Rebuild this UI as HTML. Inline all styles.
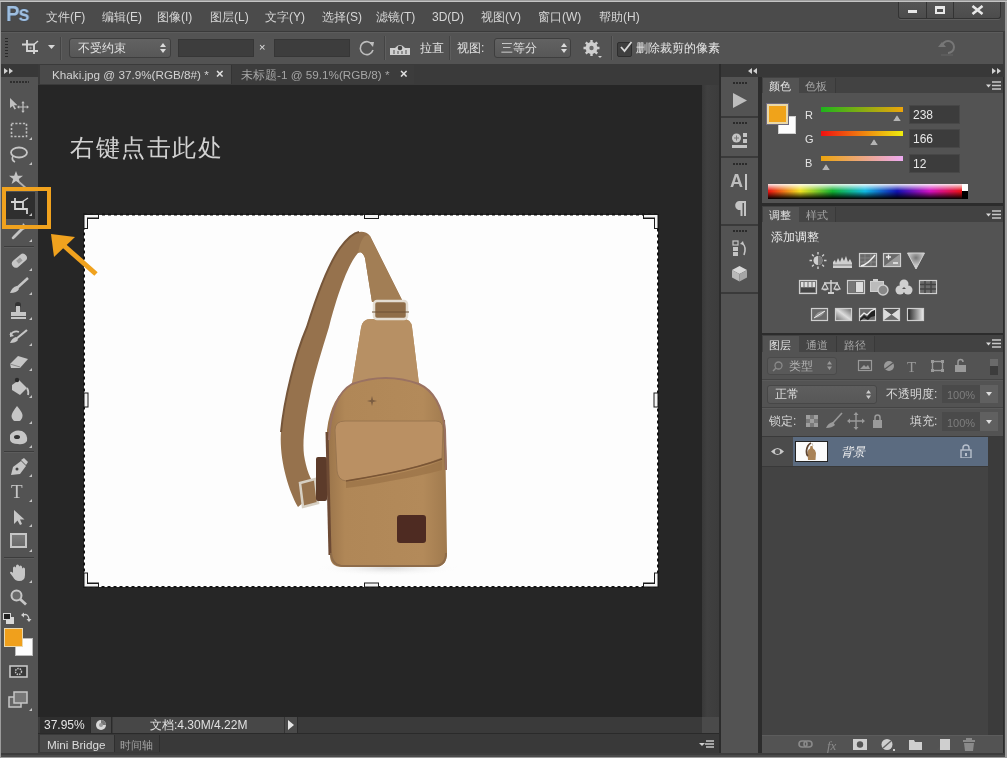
<!DOCTYPE html>
<html><head><meta charset="utf-8">
<style>
*{margin:0;padding:0;box-sizing:border-box}
html,body{width:1007px;height:758px;overflow:hidden;background:#9a9a9a;font-family:"Liberation Sans",sans-serif;}
.a{position:absolute}
.t{position:absolute;will-change:transform;white-space:nowrap;color:#d6d6d6;font-size:12px;line-height:14px}
</style></head><body>
<div class="a" style="left:0;top:0;width:1007px;height:758px;background:#9c9c9c"></div>
<div class="a" style="left:0;top:1px;width:1007px;height:1px;background:#c4c4c4"></div>
<div class="a" style="left:1px;top:2px;width:1004px;height:755px;background:#3c3c3c"></div>
<div class="a" style="left:1px;top:755px;width:1004px;height:2px;background:#4a4a4a"></div>
<!-- menu bar -->
<div class="a" id="menubar" style="left:1px;top:2px;width:1004px;height:30px;background:#4b4b4b;border-bottom:1px solid #3a3a3a"></div>
<!-- options bar -->
<div class="a" id="opts" style="left:1px;top:32px;width:1002px;height:32px;background:#535353;border-top:1px solid #5c5c5c"></div>
<!-- left toolbar -->
<div class="a" id="toolhead" style="left:1px;top:64px;width:37px;height:13px;background:#383838"></div>
<div class="a" id="toolbar" style="left:1px;top:77px;width:37px;height:676px;background:#535353"></div>
<!-- doc area -->
<div class="a" id="tabbar" style="left:38px;top:64px;width:682px;height:21px;background:#3a3a3a"></div>
<div class="a" id="canvas" style="left:38px;top:85px;width:664px;height:632px;background:#262626"></div>
<div class="a" id="vscroll" style="left:702px;top:85px;width:17px;height:632px;background:linear-gradient(90deg,#383838,#404040 30%,#3c3c3c)"></div>
<div class="a" id="status" style="left:38px;top:717px;width:664px;height:16px;background:#3a3a3a"></div>
<div class="a" id="corner" style="left:702px;top:717px;width:17px;height:16px;background:#4a4a4a"></div>
<div class="a" id="minib" style="left:38px;top:733px;width:682px;height:20px;background:#3a3a3a;border-top:1px solid #2a2a2a"></div>
<!-- dock -->
<div class="a" style="left:719px;top:64px;width:285px;height:689px;background:#2c2c2c"></div>
<div class="a" id="dockhead" style="left:721px;top:64px;width:283px;height:13px;background:#383838"></div>
<div class="a" id="iconcol" style="left:721px;top:77px;width:37px;height:676px;background:#535353"></div>
<!-- right panels -->
<div class="a" id="pcolor" style="left:762px;top:77px;width:241px;height:126px;background:#535353"></div>
<div class="a" id="padj" style="left:762px;top:206px;width:241px;height:127px;background:#535353"></div>
<div class="a" id="players" style="left:762px;top:335px;width:241px;height:418px;background:#535353"></div>

<!-- MENU CONTENT -->
<div class="t" style="left:6px;top:2px;font-size:22.5px;line-height:24px;font-weight:bold;color:#9fbfe0;letter-spacing:-1.2px;transform:scaleX(0.9);transform-origin:0 0;text-shadow:0 0 1px #2a4a78">Ps</div>
<div class="t" style="left:46px;top:10px">文件(F)</div>
<div class="t" style="left:102px;top:10px">编辑(E)</div>
<div class="t" style="left:157px;top:10px">图像(I)</div>
<div class="t" style="left:210px;top:10px">图层(L)</div>
<div class="t" style="left:265px;top:10px">文字(Y)</div>
<div class="t" style="left:322px;top:10px">选择(S)</div>
<div class="t" style="left:376px;top:10px">滤镜(T)</div>
<div class="t" style="left:432px;top:10px">3D(D)</div>
<div class="t" style="left:481px;top:10px">视图(V)</div>
<div class="t" style="left:538px;top:10px">窗口(W)</div>
<div class="t" style="left:599px;top:10px">帮助(H)</div>
<!-- window buttons -->
<div class="a" style="left:898px;top:2px;width:103px;height:17px;background:linear-gradient(#555,#4c4c4c);border:1px solid #333;border-top:none;border-radius:0 0 3px 3px;box-shadow:0 1px 0 #5e5e5e"></div>
<div class="a" style="left:926px;top:2px;width:1px;height:16px;background:#333"></div>
<div class="a" style="left:953px;top:2px;width:1px;height:16px;background:#333"></div>
<div class="a" style="left:908px;top:10px;width:9px;height:3px;background:#e8e8e8"></div>
<div class="a" style="left:935px;top:6px;width:10px;height:8px;border:2px solid #e8e8e8;border-top-width:3px"></div>
<svg class="a" style="left:971px;top:5px" width="13" height="10"><path d="M1.5 1 L11.5 9 M11.5 1 L1.5 9" stroke="#e8e8e8" stroke-width="2.6"/></svg>

<!-- OPTIONS CONTENT -->
<div class="a" style="left:5px;top:38px;width:3px;height:20px;background:repeating-linear-gradient(#2a2a2a 0 1px,transparent 1px 3px)"></div>
<svg class="a" style="left:20px;top:38px" width="20" height="18"><path d="M7 2 V13 H18 M2 6.5 H14 V16" stroke="#d4d4d4" stroke-width="1.9" fill="none"/><path d="M14 6.5 L18 3" stroke="#d4d4d4" stroke-width="1.4"/><circle cx="10.5" cy="10" r="1.2" fill="#999"/></svg>
<svg class="a" style="left:48px;top:45px" width="7" height="5"><path d="M0 0 H7 L3.5 4Z" fill="#d8d8d8"/></svg>
<div class="a" style="left:60px;top:37px;width:1px;height:23px;background:#444;box-shadow:1px 0 0 #5e5e5e"></div>
<div class="a" style="left:69px;top:38px;width:102px;height:20px;border-radius:3px;background:linear-gradient(#626262,#575757);border:1px solid #3e3e3e"></div>
<div class="t" style="left:78px;top:41px;color:#e0e0e0">不受约束</div>
<svg class="a" style="left:160px;top:43px" width="6" height="10"><path d="M0 4 L3 0 L6 4Z M0 6 L3 10 L6 6Z" fill="#dcdcdc"/></svg>
<div class="a" style="left:178px;top:39px;width:76px;height:18px;background:#3d3d3d;border:1px solid #363636"></div>
<div class="t" style="left:259px;top:40px;font-size:11px;color:#e0e0e0">×</div>
<div class="a" style="left:274px;top:39px;width:76px;height:18px;background:#3d3d3d;border:1px solid #363636"></div>
<svg class="a" style="left:358px;top:39px" width="18" height="18"><path d="M14.5 6 A6.5 6.5 0 1 0 15 11" stroke="#bdbdbd" stroke-width="1.6" fill="none"/><path d="M11 3 L16 3 L15 8Z" fill="#bdbdbd"/></svg>
<div class="a" style="left:384px;top:36px;width:1px;height:24px;background:#444;box-shadow:1px 0 0 #5e5e5e"></div>
<svg class="a" style="left:389px;top:41px" width="22" height="15"><path d="M1 7 H21 V14 H1Z" fill="#d0d0d0"/><path d="M6 7 Q11 1 16 7" fill="#d0d0d0"/><circle cx="11" cy="7" r="2.3" fill="#444"/><path d="M5 9 V13 M9 10 V13 M13 10 V13 M17 9 V13" stroke="#666" stroke-width="1.2"/></svg>
<div class="t" style="left:420px;top:41px;color:#e0e0e0">拉直</div>
<div class="a" style="left:449px;top:36px;width:1px;height:24px;background:#444;box-shadow:1px 0 0 #5e5e5e"></div>
<div class="t" style="left:457px;top:41px;color:#e0e0e0">视图:</div>
<div class="a" style="left:494px;top:38px;width:77px;height:20px;border-radius:3px;background:linear-gradient(#626262,#575757);border:1px solid #3e3e3e"></div>
<div class="t" style="left:501px;top:41px;color:#e0e0e0">三等分</div>
<svg class="a" style="left:561px;top:43px" width="6" height="10"><path d="M0 4 L3 0 L6 4Z M0 6 L3 10 L6 6Z" fill="#dcdcdc"/></svg>
<svg class="a" style="left:583px;top:39px" width="20" height="20"><g fill="#cfcfcf"><circle cx="8.5" cy="9" r="6"/><g stroke="#cfcfcf" stroke-width="2.4"><path d="M8.5 1 V17 M0.5 9 H16.5 M2.8 3.3 L14.2 14.7 M14.2 3.3 L2.8 14.7"/></g></g><circle cx="8.5" cy="9" r="2.2" fill="#6a6a6a"/><path d="M15 17 H19 L17 19Z" fill="#cfcfcf"/></svg>
<div class="a" style="left:611px;top:36px;width:1px;height:24px;background:#444;box-shadow:1px 0 0 #5e5e5e"></div>
<div class="a" style="left:617px;top:42px;width:15px;height:15px;background:#3f3f3f;border:1px solid #2e2e2e;border-radius:2px"></div>
<svg class="a" style="left:619px;top:40px" width="14" height="14"><path d="M2 7 L5.5 11 L12.5 2" stroke="#d8d8d8" stroke-width="1.8" fill="none"/></svg>
<div class="t" style="left:636px;top:41px;color:#e6e6e6">删除裁剪的像素</div>
<svg class="a" style="left:937px;top:38px" width="20" height="20"><path d="M5 9 A6 6 0 1 1 11 15" stroke="#777" stroke-width="2" fill="none"/><path d="M1 9 H9 L5 4Z" fill="#777" transform="rotate(0)"/><path d="M4 17 H16" stroke="#666" stroke-width="1"/></svg>

<!-- TABS -->
<div class="a" style="left:40px;top:65px;width:191px;height:19px;background:#4a4a4a"></div>
<div class="t" style="left:52px;top:68px;color:#d2d2d2;font-size:11.7px">Khaki.jpg @ 37.9%(RGB/8#) *</div>
<div class="t" style="left:216px;top:67px;color:#e0e0e0;font-size:13px;font-weight:bold">×</div>
<div class="a" style="left:231px;top:65px;width:183px;height:19px;background:#3c3c3c;border-left:1px solid #333"></div>
<div class="t" style="left:241px;top:68px;color:#a6a6a6;font-size:11.7px">未标题-1 @ 59.1%(RGB/8) *</div>
<div class="t" style="left:400px;top:67px;color:#e0e0e0;font-size:13px;font-weight:bold">×</div>
<!-- TOOLBAR CONTENT -->
<svg class="a" style="left:4px;top:68px" width="9" height="6"><path d="M0 0 L4 3 L0 6Z M5 0 L9 3 L5 6Z" fill="#cfcfcf"/></svg>
<div class="a" style="left:10px;top:81px;width:19px;height:2px;background:repeating-linear-gradient(90deg,#2e2e2e 0 2px,transparent 2px 3px)"></div>
<!-- move -->
<svg class="a" style="left:9px;top:97px" width="20" height="16"><path d="M1 1 L1 11 L3.5 9 L5.5 12.5 L7 11.7 L5 8.3 L8.5 8.3Z" fill="#c0c0c0"/><path d="M14 5.5 V14.5 M9.5 10 H18.5" stroke="#c0c0c0" stroke-width="1.2"/><path d="M14 4 L12.3 6.2 H15.7Z M14 16 L12.3 13.8 H15.7Z M8 10 L10.2 8.3 V11.7Z M20 10 L17.8 8.3 V11.7Z" fill="#c0c0c0"/></svg>
<!-- marquee -->
<svg class="a" style="left:10px;top:122px" width="18" height="16"><rect x="1.5" y="1.5" width="15" height="13" fill="none" stroke="#bdbdbd" stroke-width="1.6" stroke-dasharray="2.2 1.6"/></svg>
<svg class="a" style="left:29px;top:137px" width="3" height="3"><path d="M3 0 V3 H0Z" fill="#c4c4c4"/></svg>
<!-- lasso -->
<svg class="a" style="left:9px;top:146px" width="20" height="17"><ellipse cx="10" cy="6.5" rx="8" ry="5" stroke="#c6c6c6" stroke-width="1.8" fill="none"/><path d="M4 10 Q2 14 6 16" stroke="#c6c6c6" stroke-width="1.6" fill="none"/></svg>
<svg class="a" style="left:29px;top:162px" width="3" height="3"><path d="M3 0 V3 H0Z" fill="#c4c4c4"/></svg>
<!-- quick select -->
<svg class="a" style="left:8px;top:170px" width="22" height="20"><path d="M8 1 L9.8 5.8 L15 5.8 L10.8 9 L12.4 14 L8 11 L3.6 14 L5.2 9 L1 5.8 L6.2 5.8Z" fill="#c4c4c4"/><path d="M11 12 L19 19" stroke="#b0b0b0" stroke-width="1.8"/></svg>
<!-- crop selected -->
<div class="a" style="left:6px;top:192px;width:29px;height:27px;background:#2f2f2f"></div>
<svg class="a" style="left:10px;top:197px" width="20" height="18"><path d="M5 1 V12 H17 V17 M1 5 H13 V12" stroke="#d4d4d4" stroke-width="1.8" fill="none"/><path d="M12 5 L18 1" stroke="#d4d4d4" stroke-width="1.4"/></svg>
<svg class="a" style="left:29px;top:213px" width="3" height="3"><path d="M3 0 V3 H0Z" fill="#c4c4c4"/></svg>
<!-- eyedropper -->
<svg class="a" style="left:10px;top:221px" width="18" height="20"><path d="M13 2 L16 5 L14 7 L15 8 L13 9 L5 17 L3 18.5 L1.5 17 L3 15 L11 7 L10 5 L12 6Z" fill="#c4c4c4"/></svg>
<svg class="a" style="left:29px;top:239px" width="3" height="3"><path d="M3 0 V3 H0Z" fill="#c4c4c4"/></svg>
<div class="a" style="left:4px;top:246px;width:30px;height:1px;background:#3c3c3c;box-shadow:0 1px 0 #5c5c5c"></div>
<!-- healing -->
<svg class="a" style="left:9px;top:252px" width="20" height="18"><rect x="2" y="5" width="17" height="8" rx="4" transform="rotate(-40 10 9)" fill="#c6c6c6"/><rect x="8" y="7" width="5" height="4" fill="#9a9a9a" transform="rotate(-40 10 9)"/></svg>
<svg class="a" style="left:29px;top:268px" width="3" height="3"><path d="M3 0 V3 H0Z" fill="#c4c4c4"/></svg>
<!-- brush -->
<svg class="a" style="left:9px;top:277px" width="20" height="17"><path d="M19 1 L8 11" stroke="#c6c6c6" stroke-width="2.5"/><path d="M8 9 Q3 10 1 16 Q8 16 10 12Z" fill="#c6c6c6"/></svg>
<svg class="a" style="left:29px;top:292px" width="3" height="3"><path d="M3 0 V3 H0Z" fill="#c4c4c4"/></svg>
<!-- stamp -->
<svg class="a" style="left:9px;top:301px" width="20" height="19"><circle cx="9" cy="4" r="3" fill="#333"/><rect x="7" y="5" width="4" height="6" fill="#c6c6c6"/><rect x="2" y="11" width="15" height="4" fill="#c6c6c6"/><rect x="2" y="16" width="15" height="2" fill="#c6c6c6"/></svg>
<svg class="a" style="left:29px;top:317px" width="3" height="3"><path d="M3 0 V3 H0Z" fill="#c4c4c4"/></svg>
<!-- history brush -->
<svg class="a" style="left:9px;top:329px" width="20" height="16"><path d="M18 1 L7 10" stroke="#c6c6c6" stroke-width="2.2"/><path d="M7 8 Q3 9 1 14 Q7 14 9 11Z" fill="#c6c6c6"/><path d="M1 6 Q5 1 10 3" stroke="#c6c6c6" stroke-width="1.6" fill="none"/><path d="M1 3 L1 8 L5 7Z" fill="#c6c6c6"/></svg>
<svg class="a" style="left:29px;top:343px" width="3" height="3"><path d="M3 0 V3 H0Z" fill="#c4c4c4"/></svg>
<!-- eraser -->
<svg class="a" style="left:9px;top:354px" width="20" height="16"><path d="M1 10 L9 2 L19 5 L11 14 L2 14Z" fill="#c6c6c6"/><path d="M1 10 L11 13" stroke="#888" stroke-width="1"/></svg>
<svg class="a" style="left:29px;top:368px" width="3" height="3"><path d="M3 0 V3 H0Z" fill="#c4c4c4"/></svg>
<!-- bucket -->
<svg class="a" style="left:8px;top:377px" width="22" height="20"><path d="M4 8 L11 3 L19 11 L12 18 L4 13Z" fill="#c6c6c6"/><circle cx="9" cy="3" r="2.2" fill="#2a2a2a"/><path d="M19 11 Q21 15 20 18" stroke="#c6c6c6" stroke-width="1.8" fill="none"/></svg>
<svg class="a" style="left:29px;top:395px" width="3" height="3"><path d="M3 0 V3 H0Z" fill="#c4c4c4"/></svg>
<!-- blur -->
<svg class="a" style="left:10px;top:405px" width="16" height="16"><path d="M7 1 Q13 8 12.5 11 A5.5 5.5 0 0 1 1.5 11 Q1.5 8 7 1Z" fill="#c6c6c6"/></svg>
<svg class="a" style="left:29px;top:421px" width="3" height="3"><path d="M3 0 V3 H0Z" fill="#c4c4c4"/></svg>
<!-- dodge -->
<svg class="a" style="left:8px;top:428px" width="22" height="18"><path d="M2 7 Q6 1 14 3 Q20 6 19 13 Q16 17 10 16 Q3 16 2 12Z" fill="#c6c6c6"/><ellipse cx="9" cy="9" rx="3" ry="2" fill="#333"/></svg>
<svg class="a" style="left:29px;top:445px" width="3" height="3"><path d="M3 0 V3 H0Z" fill="#c4c4c4"/></svg>
<div class="a" style="left:4px;top:451px;width:30px;height:1px;background:#3c3c3c;box-shadow:0 1px 0 #5c5c5c"></div>
<!-- pen -->
<svg class="a" style="left:9px;top:458px" width="20" height="18"><path d="M2 17 L4 9 L12 3 L17 8 L11 16Z" fill="#c6c6c6"/><path d="M12 2 L15 0 L19 4 L17 7Z" fill="#c6c6c6"/><circle cx="8" cy="11" r="1.5" fill="#444"/></svg>
<svg class="a" style="left:29px;top:474px" width="3" height="3"><path d="M3 0 V3 H0Z" fill="#c4c4c4"/></svg>
<!-- type -->
<div class="t" style="left:11px;top:482px;font-family:'Liberation Serif',serif;font-size:19px;line-height:20px;color:#c6c6c6">T</div>
<svg class="a" style="left:29px;top:499px" width="3" height="3"><path d="M3 0 V3 H0Z" fill="#c4c4c4"/></svg>
<!-- path select -->
<svg class="a" style="left:13px;top:509px" width="12" height="17"><path d="M1 1 V15 L4.5 11.5 L7 16 L9 15 L7 10.5 L11.5 10.5Z" fill="#c6c6c6"/></svg>
<svg class="a" style="left:29px;top:524px" width="3" height="3"><path d="M3 0 V3 H0Z" fill="#c4c4c4"/></svg>
<!-- rect -->
<div class="a" style="left:10px;top:533px;width:17px;height:15px;background:linear-gradient(#7a7a7a,#6a6a6a);border:2px solid #c6c6c6"></div>
<svg class="a" style="left:29px;top:549px" width="3" height="3"><path d="M3 0 V3 H0Z" fill="#c4c4c4"/></svg>
<div class="a" style="left:4px;top:557px;width:30px;height:1px;background:#3c3c3c;box-shadow:0 1px 0 #5c5c5c"></div>
<!-- hand -->
<svg class="a" style="left:9px;top:564px" width="20" height="18"><path d="M4 9 V4 Q4 2.5 5.5 2.5 Q7 2.5 7 4 V2 Q7 0.5 8.5 0.5 Q10 0.5 10 2 V3 Q10 1.5 11.5 1.5 Q13 1.5 13 3 V5 Q13 3.5 14.5 3.5 Q16 3.5 16 5 V11 Q16 17 10 17 Q6 17 4 13 L1 9 Q1 7 3 8Z" fill="#c6c6c6"/></svg>
<svg class="a" style="left:29px;top:580px" width="3" height="3"><path d="M3 0 V3 H0Z" fill="#c4c4c4"/></svg>
<!-- zoom -->
<svg class="a" style="left:10px;top:589px" width="18" height="17"><circle cx="6.5" cy="6.5" r="5" stroke="#c6c6c6" stroke-width="2" fill="#6a6a6a"/><path d="M10 10 L16 15.5" stroke="#c6c6c6" stroke-width="2.8"/></svg>
<!-- default colors -->
<div class="a" style="left:6px;top:617px;width:8px;height:7px;background:#d8d8d8"></div>
<div class="a" style="left:3px;top:613px;width:8px;height:7px;background:#222;border:1px solid #d8d8d8"></div>
<svg class="a" style="left:21px;top:611px" width="11" height="12"><path d="M2 4 Q7 2 8 8" stroke="#d0d0d0" stroke-width="1.3" fill="none"/><path d="M0 4 L3 1.5 V6.5Z M8 11 L5.5 8 H10.5Z" fill="#d0d0d0"/></svg>
<!-- fg/bg -->
<div class="a" style="left:15px;top:638px;width:18px;height:18px;background:#fdfdfd;border:1px solid #bbb"></div>
<div class="a" style="left:4px;top:628px;width:19px;height:19px;background:#f0a01c;border:1px solid #e8d8b0"></div>
<!-- quick mask -->
<svg class="a" style="left:9px;top:665px" width="19" height="13"><rect x="1" y="1" width="17" height="11" stroke="#c6c6c6" stroke-width="1.6" fill="#3a3a3a"/><circle cx="9.5" cy="6.5" r="3" stroke="#c6c6c6" stroke-width="1.4" fill="none" stroke-dasharray="1.5 1"/></svg>
<!-- screen mode -->
<svg class="a" style="left:8px;top:691px" width="22" height="20"><rect x="1" y="6" width="12" height="10" stroke="#c6c6c6" stroke-width="1.5" fill="#666"/><rect x="6" y="1" width="13" height="11" stroke="#c6c6c6" stroke-width="1.5" fill="#777"/></svg>
<svg class="a" style="left:29px;top:708px" width="3" height="3"><path d="M3 0 V3 H0Z" fill="#c4c4c4"/></svg>

<!-- CANVAS CONTENT -->
<div class="t" style="left:70px;top:135px;font-family:'Liberation Serif',serif;font-size:24px;line-height:26px;color:#d2d2d2;letter-spacing:1.6px">右键点击此处</div>
<div class="a" id="img" style="left:84px;top:215px;width:574px;height:372px;background:#fdfdfd"></div>
<svg class="a" style="left:80px;top:210px" width="584" height="384">
 <rect x="4" y="4.5" width="574" height="372.5" fill="none" stroke="#141414" stroke-width="2" stroke-dasharray="3 3"/>
 <g transform="translate(4,4.5)"><path d="M-1 -0.5 H15 V4.5 H4 V14.5 H-1Z" fill="#1a1a1a"/><path d="M0.5 0.5 H14 V3 H3 V13.5 H0.5Z" fill="#f4f4f4"/></g>
 <g transform="translate(578,4.5) scale(-1,1)"><path d="M-1 -0.5 H15 V4.5 H4 V14.5 H-1Z" fill="#1a1a1a"/><path d="M0.5 0.5 H14 V3 H3 V13.5 H0.5Z" fill="#f4f4f4"/></g>
 <g transform="translate(578,377) scale(-1,-1)"><path d="M-1 -0.5 H15 V4.5 H4 V14.5 H-1Z" fill="#1a1a1a"/><path d="M0.5 0.5 H14 V3 H3 V13.5 H0.5Z" fill="#f4f4f4"/></g>
 <g transform="translate(4,377) scale(1,-1)"><path d="M-1 -0.5 H15 V4.5 H4 V14.5 H-1Z" fill="#1a1a1a"/><path d="M0.5 0.5 H14 V3 H3 V13.5 H0.5Z" fill="#f4f4f4"/></g>
 <g fill="#f4f4f4" stroke="#1a1a1a" stroke-width="1"><rect x="284.5" y="4.5" width="14" height="4"/><rect x="284.5" y="373" width="14" height="4"/><rect x="4" y="183" width="4" height="14"/><rect x="574" y="183" width="4" height="14"/></g>
</svg>

<!-- BAG -->
<svg class="a" style="left:0;top:0" width="1007" height="758" viewBox="0 0 1007 758">
 <defs>
  <linearGradient id="bodyg" x1="0" y1="0" x2="1" y2="0"><stop offset="0" stop-color="#9a744a"/><stop offset="0.15" stop-color="#b08757"/><stop offset="0.8" stop-color="#b38a5a"/><stop offset="1" stop-color="#a07a4e"/></linearGradient>
  <radialGradient id="shad" cx="0.5" cy="0.5" r="0.5"><stop offset="0" stop-color="#d8d8d8"/><stop offset="1" stop-color="#fdfdfd" stop-opacity="0"/></radialGradient>
 </defs>
 <ellipse cx="388" cy="568" rx="70" ry="8" fill="url(#shad)"/>
 <!-- strap -->
 <path d="M 298 507 C 288 490, 279 458, 281 432 C 284 400, 295 355, 307 327 C 316 298, 328 265, 340 248 C 346 240, 352 233, 359 232 Q 366 231 370 236 L 403 302 L 372 302 L 365 258 Q 362 250 358 253 C 350 262, 340 285, 329 327 C 322 350, 314 375, 310 396 C 306 415, 302 440, 304 455 C 306 468, 310 480, 318 490 Z" fill="#96724d"/>
 <path d="M 370 236 L 403 302 L 372 302 L 365 258 Q 362 250 358 253 Q 362 232 370 236Z" fill="#a27e55"/>
 <path d="M 281 432 C 284 400, 295 355, 307 327 C 316 298, 328 265, 340 248 C 346 240, 352 233, 359 232" stroke="#76563a" stroke-width="2" fill="none"/>
 <!-- buckle lower -->
 <path d="M 300 483 L 315 479 L 318 503 L 303 507 Z" fill="#96724d" stroke="#d6cfc3" stroke-width="2.5"/>
 <rect x="316" y="457" width="11" height="44" rx="2" fill="#5c3b2a"/>
 <!-- body -->
 <path d="M 361 328 Q 362 319 371 319 L 403 319 Q 411 319 412 327 L 419 384 Q 441 394 445 430 L 447 553 Q 447 567 434 567 L 342 567 Q 330 567 330 555 L 327 430 Q 331 396 352 384 Z" fill="url(#bodyg)"/>
 <path d="M 361 328 Q 362 319 371 319 L 403 319 Q 411 319 412 327 L 419 384 Q 386 372 352 384 Z" fill="#b79064"/>
 <path d="M 327 432 L 330 555" stroke="#6d4a34" stroke-width="3" fill="none"/>
 <path d="M 444 420 L 446 470" stroke="#7e5e44" stroke-width="2" fill="none"/>
 <path d="M 329 440 Q 331 396 352 384 Q 386 372 419 384 Q 441 394 445 430 L 446 470" stroke="#9a7262" stroke-width="2" fill="none"/>
 <!-- flap -->
 <path d="M 346 482 Q 365 480 390 475 Q 420 469 442 461 L 442 470 Q 420 476 390 481 Q 365 486 346 488Z" fill="#9c7448" opacity="0.8"/>
 <path d="M 335 430 Q 335 421 345 421 L 436 421 Q 443 421 443 429 L 442 458 Q 420 467 390 473 Q 365 478 346 481 Q 338 480 337 471 Z" fill="#ba9063" stroke="#9a7650" stroke-width="1"/>
 <path d="M 346 481 Q 365 478 390 473 Q 420 467 442 459" stroke="#7a5535" stroke-width="1.6" fill="none"/>
 <!-- patch -->
 <rect x="397" y="515" width="29" height="28" rx="3" fill="#4e2b22"/>
 <!-- bottom edge -->
 <path d="M 331 553 Q 332 566 344 566 L 434 566 Q 446 566 446 553" stroke="#8e6c4a" stroke-width="2" fill="none"/>
 <!-- buckle upper -->
 <rect x="374" y="301" width="33" height="18" rx="3" fill="#8f6d48" stroke="#e4ddd2" stroke-width="2.5"/>
 <path d="M 372 312 H 409" stroke="#6d5034" stroke-width="1"/>
 <path d="M372 396 l1 4 l4 1 l-4 1 l-1 4 l-1 -4 l-4 -1 l4 -1z" fill="#7a5c40"/>
</svg>
<!-- ORANGE BOX + ARROW -->
<div class="a" style="left:2px;top:187px;width:49px;height:42px;border:4px solid #f0a21e"></div>
<svg class="a" style="left:0;top:0" width="120" height="300"><path d="M96 274 L62 244" stroke="#f0a21e" stroke-width="5"/><path d="M51 234 L75 237 L54 257Z" fill="#f0a21e"/></svg>

<!-- STATUS BAR -->
<div class="a" style="left:40px;top:717px;width:50px;height:16px;background:#2e2e2e"></div>
<div class="t" style="left:44px;top:718px;font-size:12px;color:#e4e4e4">37.95%</div>
<div class="a" style="left:90px;top:717px;width:22px;height:16px;background:#474747;border-left:1px solid #2a2a2a;border-right:1px solid #2a2a2a"></div>
<svg class="a" style="left:95px;top:719px" width="12" height="12"><circle cx="6" cy="6" r="5" fill="#d8d8d8"/><path d="M6 6 L6 1 A5 5 0 0 1 11 6Z" fill="#777"/><circle cx="6" cy="6" r="2" fill="#999"/></svg>
<div class="a" style="left:113px;top:717px;width:184px;height:16px;background:#474747"></div>
<div class="t" style="left:150px;top:718px;font-size:12px;color:#e0e0e0">文档:4.30M/4.22M</div>
<div class="a" style="left:284px;top:717px;width:13px;height:16px;background:#4a4a4a;border-left:1px solid #333"></div>
<svg class="a" style="left:287px;top:720px" width="8" height="10"><path d="M1 0 L7 5 L1 10Z" fill="#e6e6e6"/></svg>
<div class="a" style="left:297px;top:717px;width:405px;height:16px;background:#3a3a3a;border-left:1px solid #2c2c2c"></div>
<!-- MINI BRIDGE -->
<div class="a" style="left:38px;top:733px;width:681px;height:20px;background:#393939;border-top:1px solid #2a2a2a"></div>
<div class="a" style="left:40px;top:735px;width:74px;height:17px;background:#4a4a4a"></div>
<div class="t" style="left:47px;top:738px;font-size:11.7px;color:#dcdcdc">Mini Bridge</div>
<div class="a" style="left:114px;top:735px;width:46px;height:17px;background:#3c3c3c;border-left:1px solid #2e2e2e;border-right:1px solid #2e2e2e"></div>
<div class="t" style="left:120px;top:738px;font-size:11px;color:#a0a0a0">时间轴</div>
<svg class="a" style="left:699px;top:740px" width="16" height="9"><path d="M0 3 H6 L3 6Z" fill="#d0d0d0"/><path d="M7 1 H15 M6 4 H15 M7 7 H15" stroke="#c8c8c8" stroke-width="1.3"/></svg>

<!-- DOCK HEADER -->
<svg class="a" style="left:748px;top:68px" width="9" height="6"><path d="M4 0 L0 3 L4 6Z M9 0 L5 3 L9 6Z" fill="#d0d0d0"/></svg>
<svg class="a" style="left:992px;top:68px" width="9" height="6"><path d="M0 0 L4 3 L0 6Z M5 0 L9 3 L5 6Z" fill="#d0d0d0"/></svg>
<!-- ICON COLUMN -->
<div class="a" style="left:721px;top:116px;width:37px;height:2px;background:#3a3a3a"></div>
<div class="a" style="left:721px;top:156px;width:37px;height:2px;background:#3a3a3a"></div>
<div class="a" style="left:721px;top:224px;width:37px;height:2px;background:#3a3a3a"></div>
<div class="a" style="left:721px;top:292px;width:37px;height:2px;background:#3a3a3a"></div>
<div class="a" style="left:733px;top:82px;width:14px;height:2px;background:repeating-linear-gradient(90deg,#2a2a2a 0 2px,transparent 2px 3px)"></div><div class="a" style="left:733px;top:122px;width:14px;height:2px;background:repeating-linear-gradient(90deg,#2a2a2a 0 2px,transparent 2px 3px)"></div><div class="a" style="left:733px;top:163px;width:14px;height:2px;background:repeating-linear-gradient(90deg,#2a2a2a 0 2px,transparent 2px 3px)"></div><div class="a" style="left:733px;top:230px;width:14px;height:2px;background:repeating-linear-gradient(90deg,#2a2a2a 0 2px,transparent 2px 3px)"></div>
<svg class="a" style="left:732px;top:93px" width="16" height="15"><path d="M1 0 L15 7.5 L1 15Z" fill="#bdbdbd"/></svg>
<svg class="a" style="left:731px;top:132px" width="18" height="17"><circle cx="5.5" cy="6" r="4.5" fill="#c4c4c4"/><path d="M3 6 h5 M5.5 3.5 v5" stroke="#777" stroke-width="1"/><rect x="12" y="1" width="4" height="4" fill="#c4c4c4"/><rect x="12" y="7" width="4" height="4" fill="#c4c4c4"/><rect x="1" y="13" width="15" height="3" fill="#c4c4c4"/></svg>
<div class="t" style="left:730px;top:172px;font-size:18px;line-height:18px;font-weight:bold;color:#bdbdbd">A</div>
<div class="a" style="left:745px;top:174px;width:1.5px;height:16px;background:#c4c4c4"></div>
<svg class="a" style="left:733px;top:200px" width="14" height="17"><path d="M6 1 H13 V16 H11 V3 H9.5 V16 H7.5 V10 A4.5 4.5 0 0 1 6 1Z" fill="#c4c4c4"/></svg>
<svg class="a" style="left:732px;top:240px" width="16" height="17"><rect x="1" y="1" width="5" height="4" stroke="#c4c4c4" stroke-width="1.2" fill="none"/><rect x="1" y="7" width="5" height="4" fill="#c4c4c4"/><rect x="1" y="12" width="5" height="4" fill="#c4c4c4"/><path d="M10 3 Q15 7 12 15" stroke="#c4c4c4" stroke-width="1.6" fill="none"/><path d="M8 4 L11 1 L12 5Z" fill="#c4c4c4"/></svg>
<svg class="a" style="left:731px;top:265px" width="17" height="17"><path d="M8.5 1 L16 5 L8.5 9 L1 5Z" fill="#d8d8d8"/><path d="M1 5 L8.5 9 V16.5 L1 12.5Z" fill="#b8b8b8"/><path d="M16 5 L8.5 9 V16.5 L16 12.5Z" fill="#a6a6a6"/></svg>

<!-- COLOR PANEL -->
<div class="a" style="left:762px;top:77px;width:241px;height:16px;background:#424242"></div>
<div class="a" style="left:763px;top:78px;width:36px;height:15px;background:#535353"></div>
<div class="t" style="left:769px;top:79px;font-size:11px;color:#e2e2e2">颜色</div>
<div class="a" style="left:799px;top:78px;width:37px;height:15px;background:#454545;border-right:1px solid #393939"></div>
<div class="t" style="left:805px;top:79px;font-size:11px;color:#a4a4a4">色板</div>
<svg class="a" style="left:986px;top:81px" width="16" height="10"><path d="M0 3.5 H5 L2.5 6.5Z" fill="#d8d8d8"/><path d="M6 1 H15 M6 4.5 H15 M6 8 H15" stroke="#c8c8c8" stroke-width="1.6"/></svg>
<div class="a" style="left:778px;top:116px;width:18px;height:18px;background:#fdfdfd;border:1px solid #cfcfcf"></div>
<div class="a" style="left:767px;top:104px;width:21px;height:20px;background:#f0a31a;border:2px solid #e9d8a8;outline:1px solid #6d6a80"></div>
<div class="t" style="left:805px;top:108px;font-size:11px;color:#e4e4e4">R</div>
<div class="t" style="left:805px;top:132px;font-size:11px;color:#e4e4e4">G</div>
<div class="t" style="left:805px;top:156px;font-size:11px;color:#e4e4e4">B</div>
<div class="a" style="left:821px;top:107px;width:82px;height:5px;background:linear-gradient(90deg,#1eb41c,#eea50a)"></div>
<div class="a" style="left:821px;top:131px;width:82px;height:5px;background:linear-gradient(90deg,#ef1010,#eeee0e)"></div>
<div class="a" style="left:821px;top:156px;width:82px;height:5px;background:linear-gradient(90deg,#eca40c,#edaaf2)"></div>
<svg class="a" style="left:892px;top:114px" width="10" height="8"><path d="M5 0.5 L9.5 7.5 H0.5Z" fill="#b4b4b4" stroke="#4a4a4a" stroke-width="0.8"/></svg><svg class="a" style="left:869px;top:138px" width="10" height="8"><path d="M5 0.5 L9.5 7.5 H0.5Z" fill="#b4b4b4" stroke="#4a4a4a" stroke-width="0.8"/></svg><svg class="a" style="left:821px;top:163px" width="10" height="8"><path d="M5 0.5 L9.5 7.5 H0.5Z" fill="#b4b4b4" stroke="#4a4a4a" stroke-width="0.8"/></svg>
<div class="a" style="left:909px;top:105px;width:51px;height:19px;background:#3c3c3c;border:1px solid #474747"></div>
<div class="a" style="left:909px;top:129px;width:51px;height:19px;background:#3c3c3c;border:1px solid #474747"></div>
<div class="a" style="left:909px;top:154px;width:51px;height:19px;background:#3c3c3c;border:1px solid #474747"></div>
<div class="t" style="left:913px;top:108px;font-size:12px;color:#e8e8e8">238</div>
<div class="t" style="left:913px;top:132px;font-size:12px;color:#e8e8e8">166</div>
<div class="t" style="left:913px;top:157px;font-size:12px;color:#e8e8e8">12</div>
<div class="a" style="left:768px;top:184px;width:194px;height:15px;background:linear-gradient(90deg,#e81010 0%,#f0e020 16.6%,#10b030 33.3%,#10b8e0 50%,#1010b0 66.6%,#d010c0 83.3%,#e81010 100%)"></div>
<div class="a" style="left:768px;top:184px;width:194px;height:15px;background:linear-gradient(rgba(255,255,255,0.9) 0%,rgba(255,255,255,0) 45%,rgba(0,0,0,0) 50%,#000 100%)"></div>
<div class="a" style="left:962px;top:184px;width:6px;height:8px;background:#fff"></div>
<div class="a" style="left:962px;top:191px;width:6px;height:8px;background:#000"></div>
<!-- ADJUSTMENTS PANEL -->
<div class="a" style="left:762px;top:206px;width:241px;height:16px;background:#424242"></div>
<div class="a" style="left:763px;top:207px;width:36px;height:15px;background:#535353"></div>
<div class="t" style="left:769px;top:208px;font-size:11px;color:#e2e2e2">调整</div>
<div class="a" style="left:799px;top:207px;width:37px;height:15px;background:#454545;border-right:1px solid #393939"></div>
<div class="t" style="left:806px;top:208px;font-size:11px;color:#a4a4a4">样式</div>
<svg class="a" style="left:986px;top:210px" width="16" height="10"><path d="M0 3.5 H5 L2.5 6.5Z" fill="#d8d8d8"/><path d="M6 1 H15 M6 4.5 H15 M6 8 H15" stroke="#c8c8c8" stroke-width="1.6"/></svg>
<div class="t" style="left:771px;top:230px;font-size:12px;color:#eaeaea">添加调整</div>

<svg class="a" style="left:0;top:0" width="1007" height="758">
 <!-- row1 -->
 <g transform="translate(809,252)"><circle cx="9" cy="8.5" r="4.5" fill="#cfcfcf"/><path d="M9 4 A4.5 4.5 0 0 1 9 13Z" fill="#777"/><g stroke="#cfcfcf" stroke-width="1.4"><path d="M9 0 V2.5 M9 14.5 V17 M0.5 8.5 H3 M15 8.5 H17.5 M3 2.5 L4.8 4.3 M13.2 12.7 L15 14.5 M15 2.5 L13.2 4.3 M4.8 12.7 L3 14.5"/></g></g>
 <g transform="translate(833,254)"><path d="M0 14 V8 L2 6 L3 9 L5 4 L7 8 L9 3 L11 7 L13 2 L15 8 L17 5 L19 9 V14Z" fill="#cfcfcf"/><path d="M0 11 H19" stroke="#7a7a7a" stroke-width="1"/></g>
 <g transform="translate(859,253)"><rect x="0.5" y="0.5" width="17" height="13" fill="#6a6a6a" stroke="#cfcfcf" stroke-width="1.2"/><path d="M1 9 H17 M1 5 H17 M6 1 V13 M12 1 V13" stroke="#8a8a8a" stroke-width="0.8"/><path d="M2 13 Q8 12 16 2" stroke="#eee" stroke-width="1.4" fill="none"/></g>
 <g transform="translate(883,253)"><rect x="0.5" y="0.5" width="17" height="13" fill="#6a6a6a" stroke="#cfcfcf" stroke-width="1.2"/><path d="M1 13 L17 1 V13Z" fill="#999"/><path d="M3 4 H8 M5.5 1.5 V6.5 M10 10 H15" stroke="#eee" stroke-width="1.3"/></g>
 <g transform="translate(907,252)"><defs><radialGradient id="vg" cx="0.5" cy="0.3" r="0.6"><stop offset="0" stop-color="#777"/><stop offset="1" stop-color="#ddd"/></radialGradient></defs><path d="M0.5 1 H17.5 L9 17Z" fill="url(#vg)" stroke="#cfcfcf" stroke-width="1"/></g>
 <!-- row2 -->
 <g transform="translate(799,280)"><rect x="0.5" y="0.5" width="17" height="13" fill="#6a6a6a" stroke="#cfcfcf" stroke-width="1.2"/><rect x="2" y="2" width="14" height="5" fill="#ddd"/><path d="M5 2 V7 M9 2 V7 M13 2 V7" stroke="#666" stroke-width="1"/><rect x="2" y="8" width="14" height="4" fill="#444"/></g>
 <g transform="translate(822,279)"><path d="M9 1 V13 M2 4 H16" stroke="#cfcfcf" stroke-width="1.5"/><path d="M0 10 L3 4 L6 10Z M12 10 L15 4 L18 10Z" fill="none" stroke="#cfcfcf" stroke-width="1.2"/><path d="M0 10 Q3 13 6 10Z M12 10 Q15 13 18 10Z" fill="#cfcfcf"/><rect x="6" y="13" width="6" height="2" fill="#cfcfcf"/></g>
 <g transform="translate(847,280)"><rect x="0.5" y="0.5" width="17" height="13" fill="#6a6a6a" stroke="#cfcfcf" stroke-width="1.2"/><rect x="2" y="2" width="6" height="10" fill="#777"/><rect x="9" y="2" width="7" height="10" fill="#ddd"/></g>
 <g transform="translate(870,279)"><rect x="0.5" y="2.5" width="13" height="10" fill="#bbb" stroke="#cfcfcf"/><circle cx="13" cy="11" r="5" fill="#888" stroke="#cfcfcf" stroke-width="1.4"/><rect x="3" y="0" width="5" height="3" fill="#cfcfcf"/></g>
 <g transform="translate(895,279)"><circle cx="9" cy="5" r="4.5" fill="#cfcfcf"/><circle cx="5" cy="11" r="4.5" fill="#cfcfcf"/><circle cx="13" cy="11" r="4.5" fill="#cfcfcf"/><path d="M9 8 L7 10 L11 10Z" fill="#555"/></g>
 <g transform="translate(919,280)"><rect x="0.5" y="0.5" width="17" height="13" fill="#6a6a6a" stroke="#cfcfcf" stroke-width="1.2"/><path d="M1 4.5 H17 M1 9 H17 M6 1 V13 M12 1 V13" stroke="#444" stroke-width="1.4"/></g>
 <!-- row3 -->
 <g transform="translate(811,308)"><rect x="0.5" y="0.5" width="16" height="12" fill="#6a6a6a" stroke="#cfcfcf" stroke-width="1.2"/><path d="M3 10 Q6 2 14 3 Q11 10 3 10Z" fill="#999"/><path d="M3 10 L14 3" stroke="#eee" stroke-width="1"/></g>
 <g transform="translate(835,308)"><defs><linearGradient id="pg" x1="0" y1="1" x2="1" y2="0"><stop offset="0" stop-color="#666"/><stop offset="0.5" stop-color="#ddd"/><stop offset="1" stop-color="#666"/></linearGradient></defs><rect x="0.5" y="0.5" width="16" height="12" fill="url(#pg)" stroke="#cfcfcf" stroke-width="1.2"/></g>
 <g transform="translate(859,308)"><rect x="0.5" y="0.5" width="16" height="12" fill="#6a6a6a" stroke="#cfcfcf" stroke-width="1.2"/><path d="M1 11 L5 7 L8 9 L12 4 L16 2 V8 L12 9 L9 12 L5 10 L1 13Z" fill="#222"/><path d="M1 9 L5 5 L8 7 L12 3 L16 1" stroke="#eee" stroke-width="1.2" fill="none"/></g>
 <g transform="translate(883,308)"><rect x="0.5" y="0.5" width="16" height="12" fill="#6a6a6a" stroke="#cfcfcf" stroke-width="1.2"/><path d="M1 1 L8.5 6.5 L1 12Z M16 1 L8.5 6.5 L16 12Z" fill="#ddd"/><path d="M1 1 L8.5 6.5 L16 1Z" fill="#555"/></g>
 <g transform="translate(907,308)"><defs><linearGradient id="gm" x1="0" x2="1"><stop offset="0" stop-color="#222"/><stop offset="1" stop-color="#eee"/></linearGradient></defs><rect x="0.5" y="0.5" width="16" height="12" fill="url(#gm)" stroke="#cfcfcf" stroke-width="1.2"/></g>
</svg>

<!-- LAYERS PANEL -->
<div class="a" style="left:762px;top:335px;width:241px;height:17px;background:#424242"></div>
<div class="a" style="left:763px;top:336px;width:36px;height:16px;background:#535353"></div>
<div class="t" style="left:769px;top:338px;font-size:11px;color:#e2e2e2">图层</div>
<div class="a" style="left:799px;top:336px;width:38px;height:16px;background:#454545;border-right:1px solid #393939"></div>
<div class="t" style="left:806px;top:338px;font-size:11px;color:#a4a4a4">通道</div>
<div class="a" style="left:837px;top:336px;width:38px;height:16px;background:#454545;border-right:1px solid #393939"></div>
<div class="t" style="left:844px;top:338px;font-size:11px;color:#a4a4a4">路径</div>
<svg class="a" style="left:986px;top:339px" width="16" height="10"><path d="M0 3.5 H5 L2.5 6.5Z" fill="#d8d8d8"/><path d="M6 1 H15 M6 4.5 H15 M6 8 H15" stroke="#c8c8c8" stroke-width="1.6"/></svg>
<!-- filter row -->
<div class="a" style="left:767px;top:357px;width:70px;height:18px;border-radius:3px;background:#595959;border:1px solid #4a4a4a"></div>
<svg class="a" style="left:772px;top:361px" width="11" height="11"><circle cx="6.5" cy="4.5" r="3.5" stroke="#8a8a8a" stroke-width="1.3" fill="none"/><path d="M4 7 L1 10" stroke="#8a8a8a" stroke-width="1.5"/></svg>
<div class="t" style="left:789px;top:359px;font-size:12px;color:#b4b4b4">类型</div>
<svg class="a" style="left:827px;top:361px" width="5" height="9"><path d="M0 3.5 L2.5 0 L5 3.5Z M0 5.5 L2.5 9 L5 5.5Z" fill="#999"/></svg>
<svg class="a" style="left:0;top:0" width="1007" height="758">
 <rect x="858.5" y="360.5" width="13" height="10" fill="none" stroke="#9a9a9a" stroke-width="1.2"/><path d="M860 369 L864 365 L866 367 L868 365 L870 369Z" fill="#9a9a9a"/>
 <circle cx="889" cy="366" r="5" fill="#9a9a9a"/><path d="M885 369 L893 363" stroke="#555" stroke-width="1.2"/>
 <text x="907" y="372" font-family="Liberation Serif" font-size="15" fill="#9a9a9a">T</text>
 <rect x="932.5" y="361.5" width="10" height="9" fill="none" stroke="#9a9a9a" stroke-width="1.4"/><rect x="931" y="360" width="3" height="3" fill="#9a9a9a"/><rect x="941" y="360" width="3" height="3" fill="#9a9a9a"/><rect x="931" y="369" width="3" height="3" fill="#9a9a9a"/><rect x="941" y="369" width="3" height="3" fill="#9a9a9a"/>
 <rect x="955" y="365" width="11" height="7" fill="#9a9a9a"/><path d="M958 365 V362 A2.5 2.5 0 0 1 963 362" stroke="#9a9a9a" stroke-width="1.5" fill="none"/>
 <rect x="990" y="359" width="8" height="16" fill="#3c3c3c"/><rect x="990" y="359" width="8" height="7" fill="#6a6a6a"/>
</svg>
<div class="a" style="left:762px;top:379px;width:241px;height:1px;background:#444;box-shadow:0 1px 0 #5a5a5a"></div>
<!-- blend row -->
<div class="a" style="left:767px;top:385px;width:110px;height:19px;border-radius:3px;background:linear-gradient(#5e5e5e,#575757);border:1px solid #474747"></div>
<div class="t" style="left:775px;top:387px;font-size:12px;color:#dcdcdc">正常</div>
<svg class="a" style="left:866px;top:390px" width="5" height="9"><path d="M0 3.5 L2.5 0 L5 3.5Z M0 5.5 L2.5 9 L5 5.5Z" fill="#ccc"/></svg>
<div class="t" style="left:886px;top:387px;font-size:12px;color:#d8d8d8">不透明度:</div>
<div class="a" style="left:942px;top:385px;width:38px;height:18px;background:#4a4a4a"></div>
<div class="t" style="left:947px;top:388px;font-size:11px;color:#7e7e7e">100%</div>
<div class="a" style="left:980px;top:385px;width:18px;height:18px;background:#606060"></div>
<svg class="a" style="left:986px;top:392px" width="6" height="4"><path d="M0 0 H6 L3 4Z" fill="#ddd"/></svg>
<div class="a" style="left:762px;top:407px;width:241px;height:1px;background:#444;box-shadow:0 1px 0 #5a5a5a"></div>
<!-- lock row -->
<div class="t" style="left:769px;top:414px;font-size:12px;color:#d4d4d4">锁定:</div>
<svg class="a" style="left:0;top:0" width="1007" height="758">
 <rect x="806" y="415" width="12" height="12" fill="#7a7a7a"/><g fill="#9e9e9e"><rect x="806" y="415" width="4" height="4"/><rect x="814" y="415" width="4" height="4"/><rect x="810" y="419" width="4" height="4"/><rect x="806" y="423" width="4" height="4"/><rect x="814" y="423" width="4" height="4"/></g>
 <path d="M842 413 L832 424" stroke="#9a9a9a" stroke-width="1.6"/><path d="M833 422 Q828 423 826 428 Q832 428 835 425Z" fill="#9a9a9a"/>
 <path d="M856 414 V428 M849 421 H863" stroke="#9a9a9a" stroke-width="1.4"/><path d="M856 412 L853.5 415 H858.5Z M856 430 L853.5 427 H858.5Z M847 421 L850 418.5 V423.5Z M865 421 L862 418.5 V423.5Z" fill="#9a9a9a"/>
 <rect x="873" y="420" width="9" height="8" fill="#9a9a9a"/><path d="M875 420 V417.5 A2.5 2.5 0 0 1 880 417.5 V420" stroke="#9a9a9a" stroke-width="1.5" fill="none"/>
</svg>
<div class="t" style="left:910px;top:414px;font-size:12px;color:#d8d8d8">填充:</div>
<div class="a" style="left:942px;top:412px;width:38px;height:19px;background:#4a4a4a"></div>
<div class="t" style="left:947px;top:416px;font-size:11px;color:#7e7e7e">100%</div>
<div class="a" style="left:980px;top:412px;width:18px;height:19px;background:#606060"></div>
<svg class="a" style="left:986px;top:420px" width="6" height="4"><path d="M0 0 H6 L3 4Z" fill="#ddd"/></svg>
<!-- layer list -->
<div class="a" style="left:762px;top:436px;width:241px;height:299px;background:#434343;border-top:1px solid #3a3a3a"></div>
<div class="a" style="left:988px;top:437px;width:15px;height:298px;background:#3b3b3b"></div>
<div class="a" style="left:762px;top:437px;width:31px;height:29px;background:#4b4b4b"></div>
<div class="a" style="left:793px;top:437px;width:195px;height:29px;background:#5b6b80"></div>
<div class="a" style="left:762px;top:466px;width:226px;height:1px;background:#393939"></div>
<svg class="a" style="left:770px;top:446px" width="15" height="11"><path d="M1 5.5 Q7.5 -1.5 14 5.5 Q7.5 12.5 1 5.5Z" fill="#c8c8c8"/><circle cx="7.5" cy="5.5" r="2.6" fill="#555"/></svg>
<div class="a" style="left:795px;top:441px;width:33px;height:21px;background:#fbfbfb;border:1px solid #222"></div>
<svg class="a" style="left:796px;top:442px" width="31" height="19"><path d="M12 18 L11.5 10 Q12 7 14 6.5 L14.5 4 L16.5 4 L17 6.5 Q19.5 7.5 20 11 L19.5 18Z" fill="#a98256"/><path d="M15 1 Q11 3 10.5 9 Q10.5 13 12 14" stroke="#5d4430" stroke-width="1.8" fill="none"/><path d="M16 1 L17 4" stroke="#c8c0b0" stroke-width="1"/></svg>
<div class="t" style="left:841px;top:445px;font-size:12px;color:#f0f0f0;font-style:italic">背景</div>
<svg class="a" style="left:960px;top:444px" width="12" height="14"><rect x="1" y="6" width="10" height="8" fill="none" stroke="#b8c0cc" stroke-width="1.4"/><path d="M3 6 V4 A3 3 0 0 1 9 4 V6" stroke="#b8c0cc" stroke-width="1.4" fill="none"/><rect x="5" y="9" width="2" height="3" fill="#b8c0cc"/></svg>
<!-- footer -->
<div class="a" style="left:762px;top:735px;width:241px;height:18px;background:#535353;border-top:1px solid #5c5c5c"></div>
<svg class="a" style="left:0;top:0" width="1007" height="758">
 <g stroke="#8a8a8a" stroke-width="1.6" fill="none"><rect x="799" y="741" width="8" height="6" rx="3"/><rect x="804" y="741" width="8" height="6" rx="3"/></g>
 <text x="827" y="750" font-family="Liberation Serif" font-style="italic" font-size="13" fill="#8a8a8a">fx</text>
 <rect x="853" y="739" width="14" height="11" fill="#cfcfcf"/><circle cx="860" cy="744.5" r="3.2" fill="#555"/>
 <circle cx="887" cy="744.5" r="5.5" fill="#cfcfcf"/><path d="M883 748 L891 741" stroke="#666" stroke-width="1.5"/><rect x="893" y="749" width="2" height="2" fill="#ccc"/>
 <path d="M909 740 H914 L915 742 H922 V750 H909Z" fill="#cfcfcf"/>
 <rect x="940" y="739" width="10" height="11" fill="#cfcfcf"/><path d="M936 750 L940 746 V750Z" fill="#555"/>
 <g fill="#8a8a8a"><rect x="963" y="740" width="12" height="2"/><rect x="966" y="738" width="6" height="2"/><path d="M964 743 H974 L973 751 H965Z"/></g>
</svg>
</body></html>
